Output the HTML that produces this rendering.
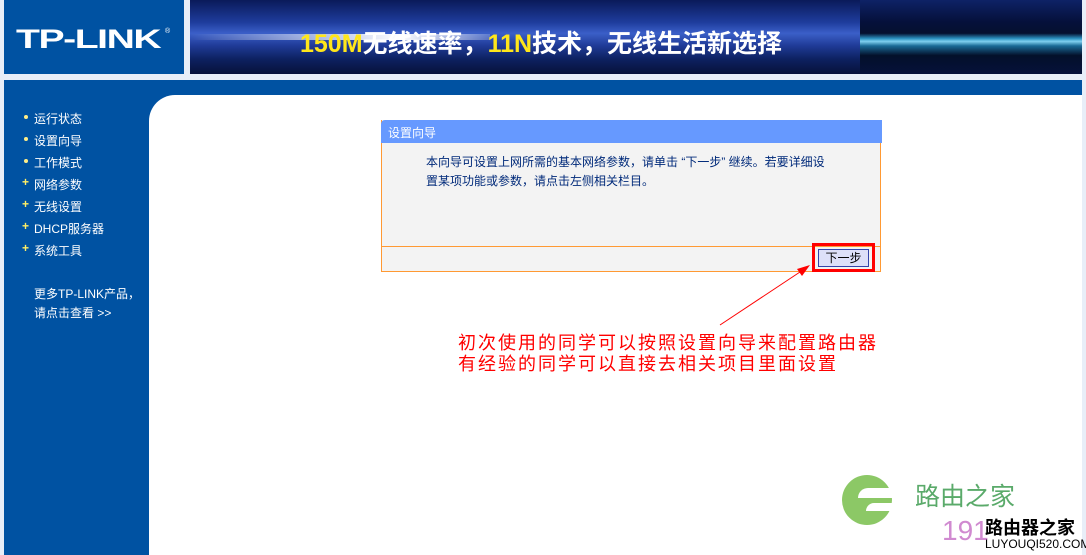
<!DOCTYPE html>
<html><head><meta charset="utf-8"><style>
body{margin:0;width:1086px;height:555px;background:#e8eef8;position:relative;overflow:hidden;font-family:"Liberation Sans","Noto Sans CJK SC",sans-serif}
.a{position:absolute}
.nav{color:#fff;font-size:12px;left:34px}
.dot{position:absolute;left:-10px;top:5px;width:4px;height:4px;background:#ffee88;border-radius:2px}
.plus{position:absolute;left:-12px;top:-1px;color:#ffee66;font-weight:bold;font-size:12px}
</style></head><body>
<div class="a" style="left:4px;top:0;width:180px;height:74px;background:#0052a2"></div>
<div class="a" style="left:16px;top:24px;color:#fff;font:bold 27px 'Liberation Sans',sans-serif;transform:scaleX(1.45);transform-origin:0 0;letter-spacing:-1px">TP-LINK</div>
<div class="a" style="left:165px;top:28px;color:#fff;font-size:7px">®</div>
<div class="a" style="left:190px;top:0;width:892px;height:74px;background:linear-gradient(180deg,#0a1a5a 0%,#1e3c9c 30%,#3b5fc8 45%,#1f3a96 62%,#0d2160 80%,#07113a 100%)"></div>
<div class="a" style="left:190px;top:34px;width:300px;height:6px;background:linear-gradient(90deg,rgba(255,255,255,0),#fff 70%,rgba(255,255,255,0.2));"></div>
<div class="a" style="left:860px;top:0;width:222px;height:74px;background:linear-gradient(180deg,#0e2266 0%,#05103a 30%,#051030 45%,#2a90c0 52%,#7fd0f0 56%,#1a6a96 62%,#03102a 75%,#06113a 100%)"></div>
<div class="a" style="left:300px;top:24px;font:bold 25px 'Liberation Sans','Noto Sans CJK SC',sans-serif;color:#fff;white-space:nowrap"><span style="color:#ffe61a">150M</span>无线速率，<span style="color:#ffe61a">11N</span>技术，无线生活新选择</div>
<div class="a" style="left:4px;top:80px;width:1078px;height:15px;background:#0052a2"></div>
<div class="a" style="left:4px;top:95px;width:175px;height:460px;background:#0052a2"></div>
<div class="a" style="left:149px;top:95px;width:933px;height:460px;background:#fff;border-top-left-radius:26px"></div>
<div class="a nav" style="top:110px"><span class="dot"></span>运行状态</div>
<div class="a nav" style="top:132px"><span class="dot"></span>设置向导</div>
<div class="a nav" style="top:154px"><span class="dot"></span>工作模式</div>
<div class="a nav" style="top:176px"><span class="plus">+</span>网络参数</div>
<div class="a nav" style="top:198px"><span class="plus">+</span>无线设置</div>
<div class="a nav" style="top:220px"><span class="plus">+</span>DHCP服务器</div>
<div class="a nav" style="top:242px"><span class="plus">+</span>系统工具</div>
<div class="a nav" style="top:285px;line-height:19px">更多TP-LINK产品，<br>请点击查看 &gt;&gt;</div>
<div class="a" style="left:381px;top:120px;width:500px;height:152px;border:1px solid #ff9933;border-top:none;background:#f3f3f3;box-sizing:border-box"></div>
<div class="a" style="left:381px;top:120px;width:501px;height:23px;background:#6699ff;border-top-left-radius:4px"></div>
<div class="a" style="left:388px;top:124px;color:#fff;font-size:12px">设置向导</div>
<div class="a" style="left:426px;top:153px;color:#002a7a;font-size:12px;line-height:19px;white-space:nowrap">本向导可设置上网所需的基本网络参数，请单击 “下一步” 继续。若要详细设<br>置某项功能或参数，请点击左侧相关栏目。</div>
<div class="a" style="left:382px;top:246px;width:499px;height:1px;background:#ff9933"></div>
<div class="a" style="left:812px;top:243px;width:57px;height:23px;border:3px solid #f00"></div>
<div class="a" style="left:818px;top:249px;width:49px;height:16px;border:1px solid #3344aa;background:#dde0f8;font-size:12px;text-align:center;line-height:16px;color:#000">下一步</div>
<svg class="a" style="left:0;top:0" width="1086" height="555"><line x1="720" y1="325" x2="806" y2="268" stroke="#f00" stroke-width="1"/><polygon points="810,265 797,269 802,276" fill="#f00"/></svg>
<div class="a" style="left:458px;top:333px;color:#f00;font-size:18px;line-height:21px;letter-spacing:2px;white-space:nowrap">初次使用的同学可以按照设置向导来配置路由器<br>有经验的同学可以直接去相关项目里面设置</div>
<div class="a" style="left:842px;top:475px;width:50px;height:50px;border-radius:50%;background:#8cc866"></div>
<div class="a" style="left:858px;top:488px;width:34px;height:10px;background:#fff;border-radius:10px 0 0 0"></div>
<div class="a" style="left:866px;top:503px;width:26px;height:8px;background:#fff;border-radius:8px 0 0 0"></div>
<div class="a" style="left:915px;top:477px;color:#5aaa6a;font-size:25px">路由之家</div>
<div class="a" style="left:942px;top:515px;color:#d08ad0;font-size:28px">191</div>
<div class="a" style="left:985px;top:514px;color:#000;font-weight:bold;font-size:18px">路由器之家</div>
<div class="a" style="left:985px;top:537px;color:#000;font-size:12px">LUYOUQI520.COM</div>
</body></html>
